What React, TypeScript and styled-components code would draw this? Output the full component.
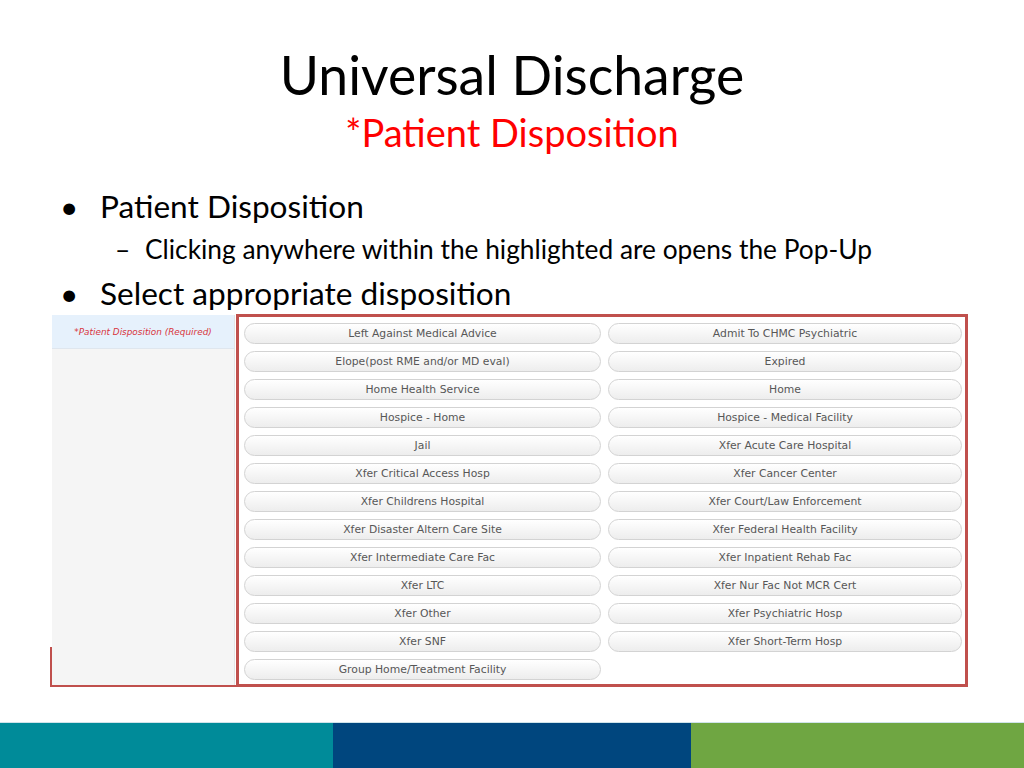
import React from 'react';
import styled, { createGlobalStyle } from 'styled-components';

const GlobalStyle = createGlobalStyle`
  html, body {
    margin: 0;
    padding: 0;
    background: #ffffff;
  }
`;

const LEFT_OPTIONS = [
  'Left Against Medical Advice',
  'Elope(post RME and/or MD eval)',
  'Home Health Service',
  'Hospice - Home',
  'Jail',
  'Xfer Critical Access Hosp',
  'Xfer Childrens Hospital',
  'Xfer Disaster Altern Care Site',
  'Xfer Intermediate Care Fac',
  'Xfer LTC',
  'Xfer Other',
  'Xfer SNF',
  'Group Home/Treatment Facility',
];

const RIGHT_OPTIONS = [
  'Admit To CHMC Psychiatric',
  'Expired',
  'Home',
  'Hospice - Medical Facility',
  'Xfer Acute Care Hospital',
  'Xfer Cancer Center',
  'Xfer Court/Law Enforcement',
  'Xfer Federal Health Facility',
  'Xfer Inpatient Rehab Fac',
  'Xfer Nur Fac Not MCR Cert',
  'Xfer Psychiatric Hosp',
  'Xfer Short-Term Hosp',
];

const Slide = styled.div`
  width: 1024px;
  height: 768px;
  display: flex;
  flex-direction: column;
  font-family: Lato, 'Open Sans', sans-serif;
  color: #000;
  overflow: hidden;
`;

const Header = styled.header`
  display: flex;
  flex-direction: column;
  align-items: center;
  padding-top: 47px;
`;

const Title = styled.h1`
  margin: 0;
  font-size: 53.5px;
  line-height: 54px;
  font-weight: 400;
`;

const Subtitle = styled.h2`
  margin: 11px 0 0;
  font-size: 38px;
  line-height: 40px;
  font-weight: 400;
  color: #ff0000;
`;

const Bullets = styled.ul`
  list-style: none;
  margin: 34px 0 0;
  padding: 0 0 0 60px;
  display: flex;
  flex-direction: column;
`;

const Item = styled.li<{ $level: number }>`
  display: flex;
  align-items: baseline;
  font-size: ${({ $level }) => ($level === 1 ? '31.6px' : '26.3px')};
  line-height: ${({ $level }) => ($level === 1 ? '40px' : '32px')};
  margin-top: ${({ $level }) => ($level === 1 ? '8px' : '7px')};
  padding-left: ${({ $level }) => ($level === 1 ? '0' : '55px')};

  &:first-child {
    margin-top: 0;
  }
`;

const Marker = styled.span<{ $level: number }>`
  display: inline-block;
  width: ${({ $level }) => ($level === 1 ? '40px' : '30px')};
`;

const Shot = styled.div`
  position: relative;
  display: flex;
  align-items: flex-start;
  margin: 2px 0 0 50px;
  width: 905px;
  height: 370px;
  padding-left: 2px;
  border-bottom: 2px solid #c0504d;

  &::before {
    content: '';
    position: absolute;
    left: 0;
    bottom: 0;
    width: 2px;
    height: 38px;
    background: #c0504d;
  }
`;

const SidePanel = styled.aside`
  width: 182px;
  height: 370px;
  background: #f5f5f5;
  border-right: 1px solid #e4e4e4;
  display: flex;
  flex-direction: column;
  flex-shrink: 0;
`;

const SideHeader = styled.div`
  height: 33px;
  background: #e6f1fc;
  border-bottom: 1px solid #dfe6ee;
  display: flex;
  align-items: center;
  justify-content: center;
  font-family: 'DejaVu Sans', Verdana, sans-serif;
  font-style: italic;
  font-size: 8.9px;
  color: #d8353d;
`;

const OptionBox = styled.div`
  flex-shrink: 0;
  margin-top: -1px;
  margin-left: 1px;
  width: 721px;
  height: 361px;
  border: 3px solid #c0504d;
  background: #ffffff;
  padding: 6px 0 0 5px;
  display: grid;
  grid-template-columns: 357px 354px;
  column-gap: 7px;
  align-content: start;
  box-sizing: content-box;
`;

const Column = styled.div`
  display: flex;
  flex-direction: column;
  gap: 7px;
`;

const OptionButton = styled.button`
  height: 21px;
  padding: 0;
  border: 1px solid #d3d3d3;
  border-radius: 11px;
  background: linear-gradient(#ffffff, #ededed);
  font-family: 'DejaVu Sans', Verdana, sans-serif;
  font-size: 10.8px;
  color: #575757;
  text-align: center;
  cursor: pointer;
`;

const Footer = styled.footer`
  margin-top: auto;
  height: 45px;
  display: grid;
  grid-template-columns: 333px 358px 1fr;
  border-top: 1px solid #cfe3ea;
`;

const Band = styled.div<{ $color: string }>`
  background: ${({ $color }) => $color};
`;

export default function App() {
  return (
    <>
      <GlobalStyle />
      <Slide>
        <Header>
          <Title>Universal Discharge</Title>
          <Subtitle>*Patient Disposition</Subtitle>
        </Header>
        <Bullets>
          <Item $level={1}>
            <Marker $level={1}>•</Marker>Patient Disposition
          </Item>
          <Item $level={2}>
            <Marker $level={2}>–</Marker>Clicking anywhere within the highlighted are opens the Pop-Up
          </Item>
          <Item $level={1}>
            <Marker $level={1}>•</Marker>Select appropriate disposition
          </Item>
        </Bullets>
        <Shot>
          <SidePanel>
            <SideHeader>*Patient Disposition (Required)</SideHeader>
          </SidePanel>
          <OptionBox>
            <Column>
              {LEFT_OPTIONS.map((o) => (
                <OptionButton key={o}>{o}</OptionButton>
              ))}
            </Column>
            <Column>
              {RIGHT_OPTIONS.map((o) => (
                <OptionButton key={o}>{o}</OptionButton>
              ))}
            </Column>
          </OptionBox>
        </Shot>
        <Footer>
          <Band $color="#008b99" />
          <Band $color="#00467e" />
          <Band $color="#6fa642" />
        </Footer>
      </Slide>
    </>
  );
}
